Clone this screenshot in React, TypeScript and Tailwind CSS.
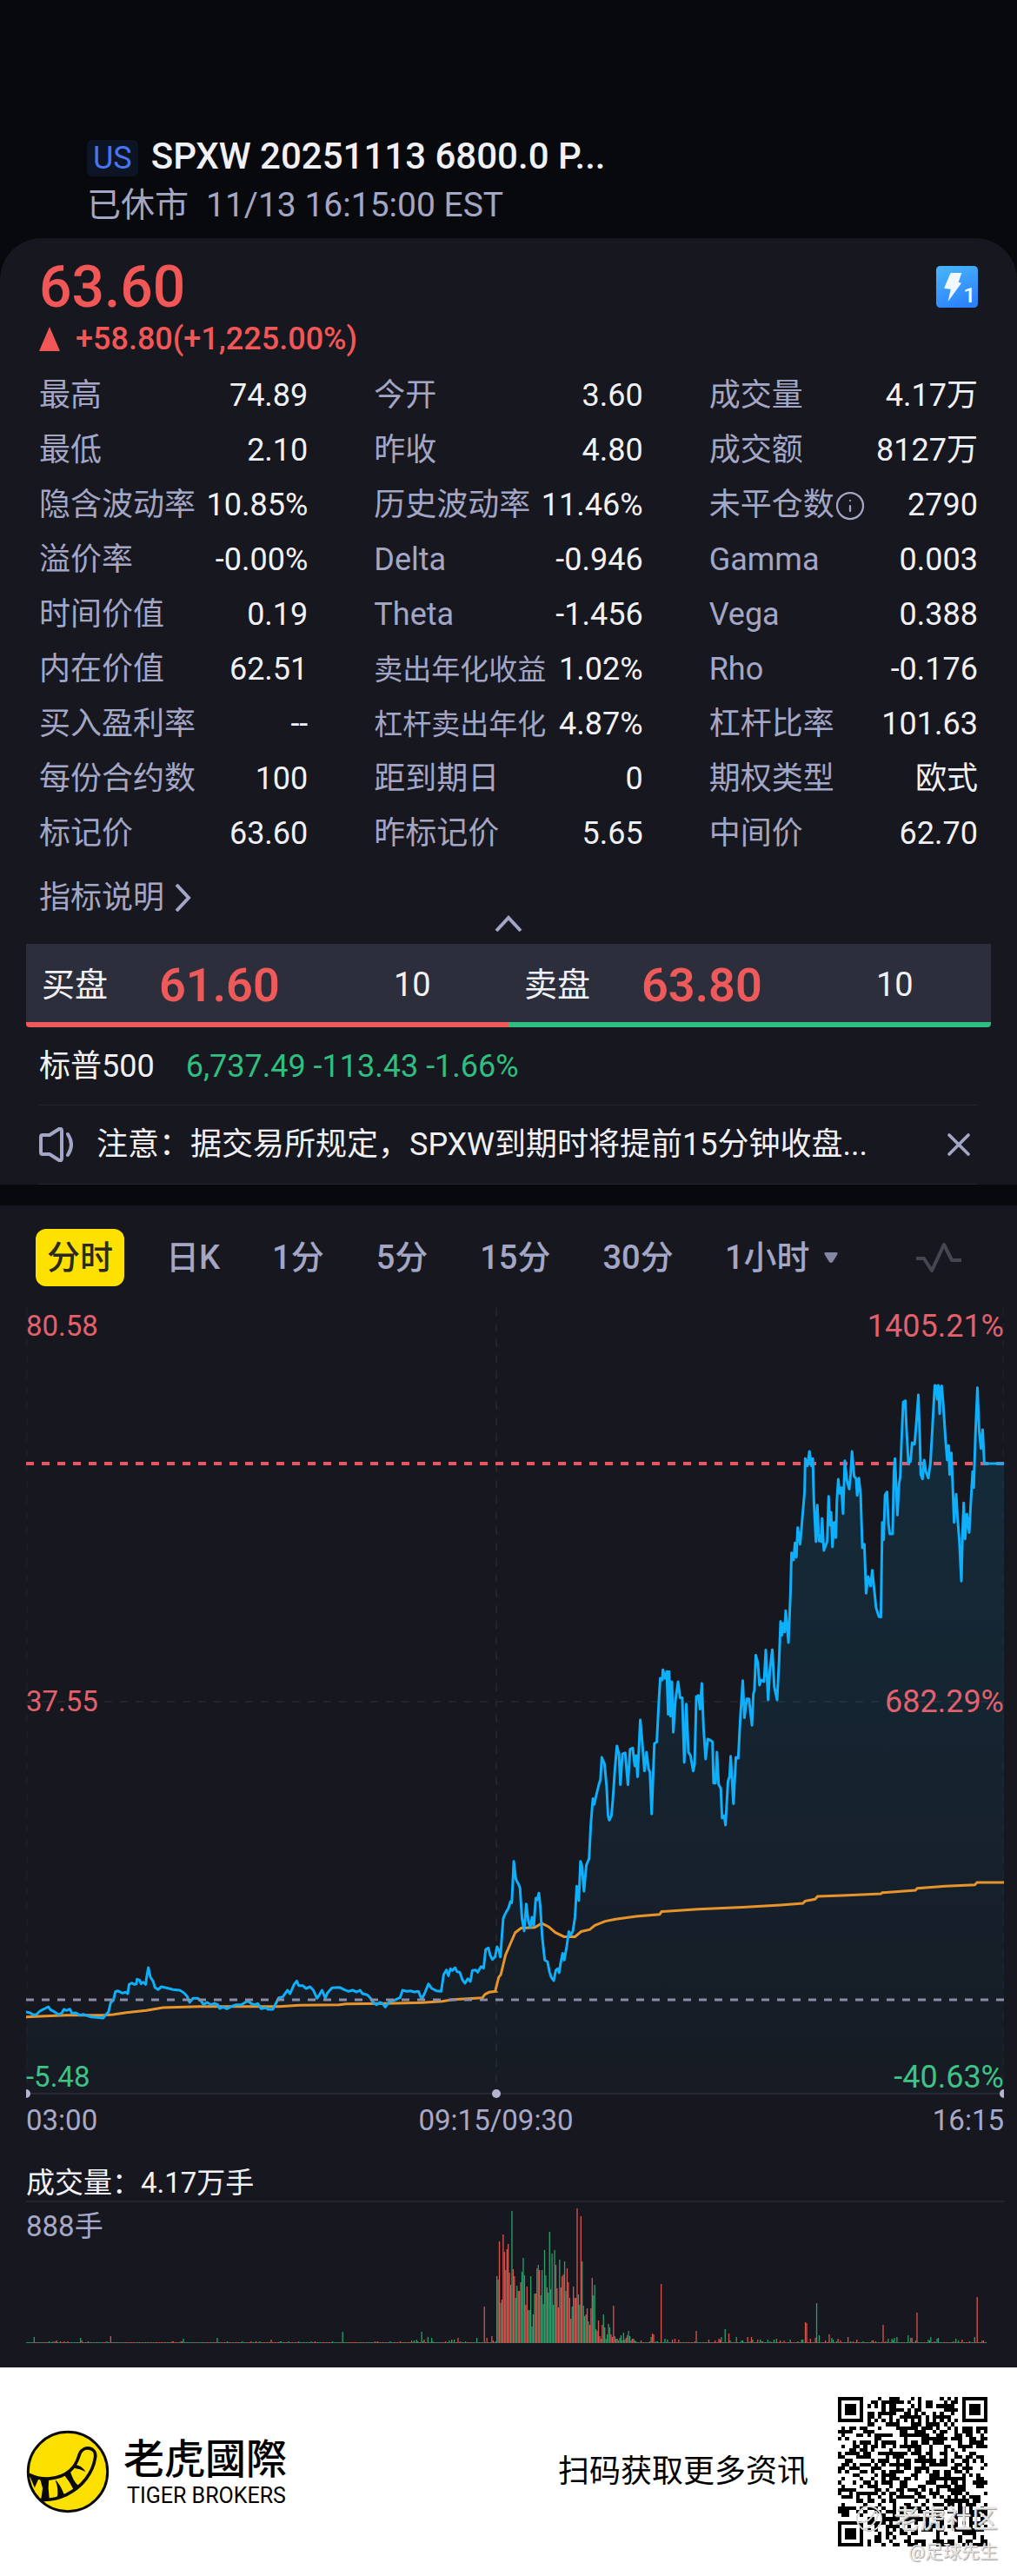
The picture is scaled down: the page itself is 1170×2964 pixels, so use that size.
import React, { useState } from 'react';
import { Info, X } from 'lucide-react';

interface Stat {
  label: string;
  value: string;
  info?: boolean;
  compact?: boolean;
}

const stats: Stat[] = [
  { label: '最高', value: '74.89' },
  { label: '今开', value: '3.60' },
  { label: '成交量', value: '4.17万' },
  { label: '最低', value: '2.10' },
  { label: '昨收', value: '4.80' },
  { label: '成交额', value: '8127万' },
  { label: '隐含波动率', value: '10.85%' },
  { label: '历史波动率', value: '11.46%' },
  { label: '未平仓数', value: '2790', info: true },
  { label: '溢价率', value: '-0.00%' },
  { label: 'Delta', value: '-0.946' },
  { label: 'Gamma', value: '0.003' },
  { label: '时间价值', value: '0.19' },
  { label: 'Theta', value: '-1.456' },
  { label: 'Vega', value: '0.388' },
  { label: '内在价值', value: '62.51' },
  { label: '卖出年化收益', value: '1.02%', compact: true },
  { label: 'Rho', value: '-0.176' },
  { label: '买入盈利率', value: '--' },
  { label: '杠杆卖出年化', value: '4.87%', compact: true },
  { label: '杠杆比率', value: '101.63' },
  { label: '每份合约数', value: '100' },
  { label: '距到期日', value: '0' },
  { label: '期权类型', value: '欧式' },
  { label: '标记价', value: '63.60' },
  { label: '昨标记价', value: '5.65' },
  { label: '中间价', value: '62.70' },
];

const periods = ['分时', '日K', '1分', '5分', '15分', '30分'];

// Each series segment keeps its own origin and scale
interface Segment {
  ox: number;
  oy: number;
  kx: number;
  ky: number;
  data: string;
}

const priceSegments: Segment[] = [
  {
    ox: 0, oy: 1950, kx: 2.613, ky: 3,
    data: '78,1095 90,1098 100,1105 110,1103 120,1092 132,1085 145,1077 152,1088 163,1094 175,1103 185,1100 192,1086 200,1090 210,1085 216,1100 228,1098 240,1106 250,1103 262,1108 275,1112 290,1114 310,1116 318,1104 326,1095 333,1062 341,1054 347,1025 354,1022 368,1030 378,1027 384,1032 388,1000 396,995 404,1000 410,998 412,982 420,985 424,998 430,992 438,1000 440,980 446,942 452,975 460,988 466,1010 475,1018 485,1008 500,1012 520,1018 540,1020 552,1028 562,1040 570,1062 580,1048 595,1048 605,1058 612,1070 622,1062 635,1070 645,1065 655,1070 660,1083 672,1078 682,1084 695,1076 710,1070 725,1070 745,1057 755,1066 765,1070 775,1066 785,1084 800,1080 805,1086 820,1086 830,1064 838,1046 850,1043 864,1020 872,1032 884,1000 892,988 898,1004 910,1004 920,1014 932,1008 942,1020 953,1048 960,1036 968,1020 978,1048 984,1030 998,1012 1020,1010 1035,1018 1048,1024 1060,1020 1072,1026 1082,1020 1090,1032 1104,1036 1114,1048 1122,1062 1132,1070 1142,1062 1150,1066 1158,1078 1170,1060 1185,1055 1203,1045 1210,1020 1222,1024 1234,1022 1246,1026 1258,1024 1268,1052 1278,1026 1288,998 1298,1014 1312,1022 1326,1024 1334,965 1342,950 1348,970 1354,946 1360,952 1368,942 1374,956 1382,958 1390,984 1398,996 1406,980 1414,990 1420,952 1430,950 1436,958 1446,938 1454,944 1460,880 1468,874 1474,900 1480,914 1488,905 1494,870 1500,884 1504,905',
  },
  {
    ox: 550, oy: 1850, kx: 2.529, ky: 2.529,
    data: '65,1015 73,905 77,895 82,885 88,875 94,855 98,858 104,738 110,790 118,805 122,815 128,905 134,940 140,862 146,910 152,930 157,900 162,925 168,845 172,850 177,830 181,870 187,960 194,1025 202,1030 208,1060 213,1075 220,1085 226,1055 232,1050 236,1062 240,1035 246,1005 251,1025 258,985 264,942 270,952 276,940 282,900 287,810 293,852 298,738 302,750 308,825 315,748 323,730 328,630 334,555 338,572 344,545 352,512 356,500 360,435 368,455 374,520 378,605 382,618 388,605 392,560 398,470 404,402 410,425 414,515 420,425 428,422 436,515 442,412 450,408 456,460 460,430 464,492 472,326 478,395 484,475 490,420 496,468 500,478 505,600 513,395 520,390 526,270 530,205 536,210 538,180 544,205 549,185 553,310 556,185 560,315 564,215 568,362 574,270 582,215 588,262 594,262 600,450 606,280 612,420 618,430 626,475 630,455 635,258 641,255 646,295 651,220 656,350 662,440 668,382 675,385 682,390 685,510 691,510 695,420 700,515 706,525 710,612 716,605 720,632 727,505 732,490 735,432 743,570 750,435 757,438 763,320 770,212 775,320 782,265 788,265 797,342 801,250 804,240 808,138 814,160 819,225 824,210 832,215 837,123 844,268 849,180 856,122 862,230 870,268 876,150 880,40 884,80 888,45 892,70 895,8',
  },
  {
    ox: 550, oy: 1500, kx: 2.529, ky: 3,
    data: '903,1170 909,1000 912,860 918,885 922,826 926,875 930,773 937,830 943,745 950,650 952,535 958,560 964,510 970,560 974,535 977,680 983,822 987,695 992,820 996,800 999,822 1001,742 1006,852 1016,820 1020,665 1024,765 1027,720 1031,840 1036,755 1041,808 1044,680 1048,606 1052,655 1057,635 1062,725 1067,542 1073,610 1080,640 1084,590 1088,510 1094,595 1100,605 1103,662 1108,602 1113,660 1118,843 1124,830 1129,1000 1135,942 1142,975 1147,920 1152,980 1158,1050 1166,1080 1172,1082 1176,755 1180,815 1184,660 1190,650 1194,760 1198,795 1206,795 1210,580 1213,535 1220,730 1225,620 1228,600 1232,480 1237,340 1243,335 1246,420 1252,550 1258,545 1263,480 1270,485 1276,400 1281,315 1285,450 1288,590 1293,605 1298,540 1303,580 1310,602 1316,550 1321,450 1326,340 1329,282 1333,285 1336,330 1339,282 1343,380 1346,290 1349,284 1353,340 1360,470 1365,540 1369,490 1372,590 1377,515 1380,600 1385,755 1391,658 1395,740 1400,815 1406,958 1410,780 1413,688 1417,812 1422,727 1429,790 1434,680 1439,580 1442,635 1447,450 1453,290 1458,440 1463,500 1468,435 1473,552 1530,552',
  },
];

const averageSegments: Segment[] = [
  {
    ox: 0, oy: 1950, kx: 2.613, ky: 3,
    data: '78,1112 120,1110 200,1106 310,1106 340,1104 380,1097 440,1090 490,1080 600,1076 720,1076 840,1076 900,1072 1020,1070 1040,1067 1160,1066 1270,1063 1330,1058 1360,1052 1450,1046 1458,1034 1470,1027 1490,1024',
  },
  {
    ox: 550, oy: 1850, kx: 2.529, ky: 2.529,
    data: '50,1115 60,1075 66,1068 80,1010 95,975 108,945 125,932 165,930 185,918 205,928 225,945 250,957 282,957 300,942 325,936 340,924 370,912 400,906 460,898 528,892 534,884 640,877 770,871 880,865 945,860 952,853 980,848 988,840 1060,837 1172,832 1176,829 1272,822 1278,816 1360,810 1445,806 1452,799 1530,799',
  },
];

const toPoints = (segments: Segment[]) =>
  segments
    .map(({ ox, oy, kx, ky, data }) =>
      data
        .split(' ')
        .map(pair => {
          const [x, y] = pair.split(',').map(Number);
          return `${(ox + x / kx).toFixed(1)},${(oy + y / ky).toFixed(1)}`;
        })
        .join(' ')
    )
    .join(' ');

const pricePoints = toPoints(priceSegments);
const averagePoints = toPoints(averageSegments);

// Volume per minute after the open: height plus direction
const openingVolume =
  '77r 73g 117r 46g 50r 125r 105r 84g 108r 114r 81r 67r 152g 85r 77r 52g 66g 60r 60g 70r 82g 98g 78g 44r 65r 38g 38g 77g 19g 33r 57g 57r 86r 90g 84r 55g 84g 45g 107g 78g 64r 58g 128g 62g 103g 44g 107g 90r 63r 41r 96g 64r 77r 79r 94g 60g 86r 70r 52r 28r 42g 65r 52r 52r 155r 56g 44g 146r 94g 43g 31g 33r 40r 25g 21r 40r 75r 55g 67g 16g 14r 26r 8r 5g 21r 33g 18r 5g 10g 22g 18g 10r 7r 43r 8r 5g 5r 3g 6g 9g 3r 12g 4g 6r 9r 14g 8g 3r 5r 5r 3g 2r'.split(' ');

const spikes: Record<number, string> = {
  6: '7g', 43: '6g', 67: '8r', 125: '5g', 152: '6g', 195: '4r', 252: '13g', 315: '13g',
  341: '4g', 359: '6g', 365: '42r', 367: '6r', 371: '8r', 499: '11r', 500: '10r', 506: '68r',
  534: '14r', 557: '16g', 560: '11r', 575: '7r', 621: '24r', 622: '23r', 630: '46g', 632: '9g',
  640: '10r', 683: '21r', 694: '7g', 703: '9g', 710: '35r', 758: '53r',
};

let seed = 11;
const random = () => {
  seed = (seed * 16807) % 2147483647;
  return seed / 2147483647;
};

const volumeBars = Array.from({ length: 766 }, (_, i) => {
  const noise = random();
  const up = random() > 0.5 ? 'r' : 'g';
  const quiet = i < 300 ? 0.8 : 0.6;
  const fallback = `${noise > quiet ? Math.round(1 + (noise - quiet) * (noise - quiet) * 40) : 1}${up}`;
  const bar = spikes[i] ?? openingVolume[i - 375] ?? fallback;
  return { x: 30 + i * 1.4427, height: parseInt(bar, 10), red: bar.endsWith('r') };
});

const QR_SIZE = 41;

const qrModules = (() => {
  const cells: string[] = [];
  const finder = (x: number, y: number, fx: number, fy: number) => {
    const dx = Math.abs(x - fx - 3);
    const dy = Math.abs(y - fy - 3);
    const d = Math.max(dx, dy);
    if (d > 4) return null;
    return d === 3 || d <= 1;
  };
  for (let y = 0; y < QR_SIZE; y++) {
    for (let x = 0; x < QR_SIZE; x++) {
      const ring = Math.max(Math.abs(x - 34), Math.abs(y - 34));
      const noise = random() > 0.5;
      const dark =
        finder(x, y, 0, 0) ??
        finder(x, y, 34, 0) ??
        finder(x, y, 0, 34) ??
        (ring <= 2 ? ring !== 1 : x === 6 ? y % 2 === 0 : y === 6 ? x % 2 === 0 : noise);
      if (dark) cells.push(`M${x} ${y}h1v1h-1z`);
    }
  }
  return cells.join('');
})();

const LightningBadge = () => (
  <svg className="h-12 w-12" viewBox="0 0 144 144" aria-hidden="true">
    <defs>
      <linearGradient id="badge" x1="0.3" y1="0" x2="0.7" y2="1">
        <stop offset="0" stopColor="#47b2fb" />
        <stop offset="1" stopColor="#2b80fc" />
      </linearGradient>
    </defs>
    <rect width="144" height="144" rx="14" fill="url(#badge)" />
    <path d="M50 24h38L77 56l10 3-46 64 9-43-23-3z" fill="#f1f8ff" />
    <text x="94" y="126" fontSize="74" fontWeight="500" fill="#fff">1</text>
  </svg>
);

const SpeakerIcon = () => (
  <svg className="h-10 w-10 shrink-0" viewBox="0 0 40 40" fill="none" stroke="#a3a6c5" strokeWidth="4" aria-hidden="true">
    <path d="M2 11q0-2 2-2h8L23 2q3-1 3 2v32q0 3-3 2l-11-7H4q-2 0-2-2z" strokeLinejoin="round" />
    <path d="M33 8q8 12 0 24" strokeLinecap="round" />
  </svg>
);

const TigerLogo = () => (
  <svg className="h-24 w-24 shrink-0" viewBox="28 46 292 292" aria-hidden="true">
    <circle cx="174" cy="192" r="139" fill="#fbe000" stroke="#0a0a0a" strokeWidth="9" />
    <g fill="none" stroke="#0a0a0a" strokeWidth="11" strokeLinecap="round">
      <path d="M38 202C84 224 142 222 182 188C208 164 208 148 216 128C230 98 276 106 270 142C262 196 226 244 170 272C136 288 110 292 80 290" />
    </g>
    <g fill="#0a0a0a">
      <path d="M36 196l38 16-16 36z" />
      <path d="M76 214l32 2-2 34 4 42H80l6-42z" />
      <path d="M130 220q18 16 32 54l-26 10q8-28-6-64z" />
      <path d="M162 204l20-16q10 36 28 52l-16 14q-14-28-32-50z" />
      <path d="M200 168q22 2 36 24q-20-10-38-12z" />
    </g>
  </svg>
);

const PriceChart = () => (
  <div className="relative mt-5">
    <svg className="block h-auto w-full" viewBox="30 1500 1125 916" aria-label="分时走势">
      <defs>
        <linearGradient id="area" x1="0" y1="0" x2="0" y2="1">
          <stop offset="0" stopColor="#00b4ff" stopOpacity="0.13" />
          <stop offset="1" stopColor="#00b4ff" stopOpacity="0.02" />
        </linearGradient>
      </defs>
      <g stroke="#22242c" strokeWidth="2" strokeDasharray="9 9">
        <path d="M571 1505V2409" />
        <path d="M30 1958H1155" />
      </g>
      <path d="M31 1505V2409M1154 1505V2409" stroke="#1c1d25" strokeWidth="2" strokeDasharray="9 9" />
      <path d="M30 2409H1155" stroke="#262831" strokeWidth="2" />
      <path d="M30 1684H1155" stroke="#e05a64" strokeWidth="4" strokeDasharray="9 9" />
      <polygon points={`30,2409 ${pricePoints} 1155,2409`} fill="url(#area)" />
      <polyline points={averagePoints} fill="none" stroke="#e8942c" strokeWidth="3" />
      <polyline points={pricePoints} fill="none" stroke="#0fb0fb" strokeWidth="3" strokeLinejoin="round" />
      <path d="M30 2301H1155" stroke="#8b8da6" strokeWidth="3" strokeDasharray="9 9" />
      <g fill="#b4b6d0">
        <circle cx="30" cy="2409" r="5" />
        <circle cx="571" cy="2409" r="5" />
        <circle cx="1155" cy="2409" r="5" />
      </g>
    </svg>
    <div className="absolute inset-0 flex flex-col justify-between pt-1 pb-1 text-[#e2616c]">
      <div className="flex items-center justify-between">
        <span className="text-[33px] leading-[44px]">80.58</span>
        <span className="text-[36px] leading-[44px]">1405.21%</span>
      </div>
      <div className="flex items-center justify-between">
        <span className="text-[33px] leading-[44px]">37.55</span>
        <span className="text-[36px] leading-[44px]">682.29%</span>
      </div>
      <div className="flex items-center justify-between text-[#3fc286]">
        <span className="text-[33px] leading-[44px]">-5.48</span>
        <span className="text-[36px] leading-[44px]">-40.63%</span>
      </div>
    </div>
  </div>
);

const VolumeChart = () => (
  <div className="relative border-t-2 border-[#23252e]">
    <svg className="block h-auto w-full" viewBox="30 0 1125 162" aria-label="成交量">
      {volumeBars.map(({ x, height, red }, i) => (
        <rect key={i} x={x} y={162 - height} width="1.3" height={height} fill={red ? '#d9534f' : '#27a06b'} />
      ))}
    </svg>
    <span className="absolute top-2 left-0 text-[33px] leading-10 text-[#a6a9c8]">888手</span>
  </div>
);

const Quote: React.FC<{ side: string; price: string; size: string }> = ({ side, price, size }) => (
  <div className="flex flex-1 items-center pt-1 pl-[18px]">
    <span className="w-[135px] text-[38px]">{side}</span>
    <span className="w-[270px] text-[54px] font-semibold text-[#ee5a5a]">{price}</span>
    <span className="text-[38px]">{size}</span>
  </div>
);

const App: React.FC = () => {
  const [period, setPeriod] = useState('分时');
  const [showNotice, setShowNotice] = useState(true);

  return (
    <div className="bg-[#08090c] font-['Roboto','Noto_Sans_CJK_SC',sans-serif] text-[#f1f1f5]">
      <header className="px-[100px] pt-[156px] pb-[14px]">
        <div className="flex items-center gap-[15px]">
          <span className="mt-1 rounded-md bg-[#0d1423] px-[7px] text-[36px] leading-[42px] text-[#4676f0]">US</span>
          <h1 className="text-[42px] leading-[48px] font-medium">SPXW 20251113 6800.0 P...</h1>
        </div>
        <p className="mt-2 flex gap-5 text-[39px] leading-[48px] text-[#a3a6c5]">
          <span>已休市</span>
          <span>11/13 16:15:00 EST</span>
        </p>
      </header>

      <section className="rounded-t-[48px] bg-[#17181f] pt-[22px]">
        <div className="px-[45px]">
          <div className="flex items-start justify-between">
            <div className="text-[66px] leading-[70px] font-medium text-[#f15757]">63.60</div>
            <button type="button" aria-label="闪电下单" className="mt-[10px]">
              <LightningBadge />
            </button>
          </div>
          <div className="flex items-center gap-[18px] text-[36px] leading-[48px] font-medium text-[#f15757]">
            <svg className="h-7 w-6" viewBox="0 0 24 28" aria-hidden="true">
              <path d="M12 0l12 28H0z" fill="currentColor" />
            </svg>
            <span>+58.80(+1,225.00%)</span>
          </div>

          <dl className="mt-[10px] grid grid-cols-3 gap-x-[76px]">
            {stats.map(({ label, value, info, compact }) => (
              <div key={label} className="flex items-center justify-between text-[36px] leading-[63px] whitespace-nowrap">
                <dt className="flex items-center text-[#a3a6c5]">
                  <span className={compact ? 'text-[33px]' : ''}>{label}</span>
                  {info && <Info className="h-9 w-9" strokeWidth={1.5} />}
                </dt>
                <dd>{value}</dd>
              </div>
            ))}
          </dl>

          <a href="#metrics" className="mt-[22px] flex w-fit items-center text-[36px] leading-10 text-[#a3a6c5]">
            指标说明
            <svg className="ml-3 h-8 w-5" viewBox="0 0 20 32" fill="none" stroke="currentColor" strokeWidth="4" aria-hidden="true">
              <path d="M2 1l14 15L2 31" />
            </svg>
          </a>
          <button type="button" aria-label="收起" className="mx-auto block h-5 text-[#a3a6c5]">
            <svg className="h-5 w-8" viewBox="0 0 32 20" fill="none" stroke="currentColor" strokeWidth="4" aria-hidden="true">
              <path d="M2 18L16 3l14 15" />
            </svg>
          </button>
        </div>

        <div className="mx-[30px] mt-[13px]">
          <div className="flex h-[90px] bg-[#2c2e3c]">
            <Quote side="买盘" price="61.60" size="10" />
            <Quote side="卖盘" price="63.80" size="10" />
          </div>
          <div className="flex h-[6px] overflow-hidden rounded-b-sm">
            <div className="flex-1 bg-[#ee5a5a]" />
            <div className="flex-1 bg-[#2fbf80]" />
          </div>
        </div>

        <div className="px-[45px]">
          <div className="flex gap-9 pt-[21px] pb-5 text-[36px] leading-[48px]">
            <span>标普500</span>
            <span className="text-[#2fbf80]">6,737.49 -113.43 -1.66%</span>
          </div>
          {showNotice && (
            <div className="flex h-[92px] items-center border-y border-[#23252e]">
              <SpeakerIcon />
              <p className="ml-[26px] flex-1 truncate text-[36px] leading-[48px]">注意：据交易所规定，SPXW到期时将提前15分钟收盘...</p>
              <button type="button" aria-label="关闭" className="text-[#a3a6c5]" onClick={() => setShowNotice(false)}>
                <X className="h-11 w-11" strokeWidth={2} />
              </button>
            </div>
          )}
        </div>
      </section>

      <section className="mt-6 bg-[#17181f] pt-[27px] pb-7">
        <div className="flex items-center pr-16 pl-[41px] text-[38px] leading-[66px] font-medium text-[#a3a6c5]">
          <div className="flex flex-1 items-center gap-[60px]">
            {periods.map(item => (
              <button
                key={item}
                type="button"
                onClick={() => setPeriod(item)}
                className={item === period ? '-mr-3 rounded-xl bg-[#ffe100] px-[13px] text-[#2a2a20]' : ''}
              >
                {item}
              </button>
            ))}
          </div>
          <label className="flex items-center gap-4">
            <select aria-label="更多周期" className="appearance-none bg-transparent">
              <option>1小时</option>
            </select>
            <svg className="h-3 w-4" viewBox="0 0 16 12" aria-hidden="true">
              <path d="M1 0h14q1 1 0 3l-5 8q-2 2-4 0L1 3q-1-2 0-3z" fill="#8486a2" />
            </svg>
          </label>
          <button type="button" aria-label="指标" className="ml-[90px]">
            <svg className="h-9 w-[52px]" viewBox="0 0 52 36" fill="none" stroke="#454651" strokeWidth="4" strokeLinejoin="round" aria-hidden="true">
              <path d="M0 19h9l9 14L32 3l9 18h11" />
            </svg>
          </button>
        </div>

        <div className="pr-[15px] pl-[30px]">
          <PriceChart />
          <div className="mt-1 flex justify-between text-[33px] leading-10 text-[#a6a9c8]">
            <span className="w-40">03:00</span>
            <span>09:15/09:30</span>
            <span className="w-[204px] text-right">16:15</span>
          </div>
          <div className="mt-8 text-[33px] leading-10">成交量：4.17万手</div>
          <VolumeChart />
        </div>
      </section>

      <footer className="flex h-60 items-center bg-white pr-[34px] pl-[30px] text-black">
        <TigerLogo />
        <div className="ml-4 flex-1">
          <div className="font-['Noto_Sans_CJK_TC',sans-serif] text-[47px] leading-[56px] font-medium">老虎國際</div>
          <div className="pl-1 text-[25px] leading-9">TIGER BROKERS</div>
        </div>
        <p className="text-[36px] leading-[48px]">扫码获取更多资讯</p>
        <div className="relative ml-[34px]">
          <svg className="block h-[172px] w-[172px]" viewBox="0 0 41 41" shapeRendering="crispEdges" role="img" aria-label="二维码">
            <path d={qrModules} />
          </svg>
          <div className="absolute -right-3 -bottom-6 flex flex-col items-end whitespace-nowrap text-[#e4e4e4] [text-shadow:1px_1px_1px_#999]">
            <div className="flex items-center gap-3 text-[30px] leading-10">
              <svg className="h-8 w-8" viewBox="0 0 32 32" fill="none" stroke="#d8d8d8" strokeWidth="2" aria-hidden="true">
                <circle cx="16" cy="16" r="14" />
                <path d="M3 20q12 2 17-8q4-8 6 0q-3 12-17 17" />
              </svg>
              <span>老虎社区</span>
            </div>
            <span className="text-[21px] leading-9">@足球先生</span>
          </div>
        </div>
      </footer>
    </div>
  );
};

export default App;
